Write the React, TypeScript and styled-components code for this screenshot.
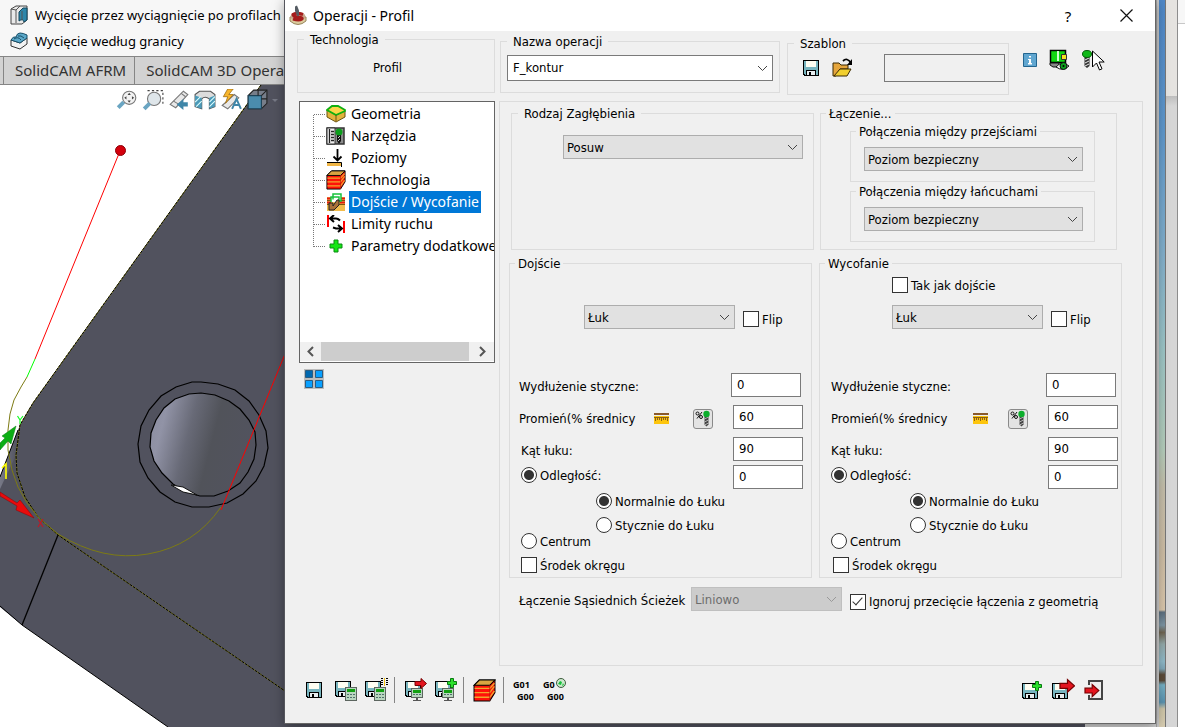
import React, { useState } from 'react';
import styled, { createGlobalStyle } from 'styled-components';

const GlobalStyle = createGlobalStyle`
  *, *::before, *::after { box-sizing: border-box; }
  html, body { margin: 0; padding: 0; }
  body { overflow: hidden; background: #fff; color: #000; }
  body, button, input, select { font-family: 'DejaVu Sans Condensed', 'DejaVu Sans', sans-serif; font-size: 13px; }
  button { border: 0; padding: 0; background: none; color: inherit; }
  svg { display: block; }
`;

const uiFont = `'Noto Sans', 'Open Sans', sans-serif`;

/* ---------- host application ---------- */

const Desktop = styled.div`
  position: relative;
  min-height: 100vh;
  overflow: hidden;
  display: flex;
`;
const Host = styled.div`
  flex: 1;
  min-width: 0;
  display: flex;
  flex-direction: column;
  background: #c9c9c9;
`;
const Ribbon = styled.div`
  height: 56px;
  padding: 2px 0 0 10px;
  background: #f7f7f7;
  display: flex;
  flex-direction: column;
  align-items: flex-start;
`;
const RibbonButton = styled.button`
  display: flex;
  align-items: center;
  gap: 7px;
  height: 26px;
  font-family: ${uiFont};
  font-size: 13px;
  white-space: nowrap;
`;
const TabBar = styled.div`
  height: 29px;
  padding-left: 3px;
  display: flex;
  background: #d2d2d2;
  border-top: 1px solid #858585;
  border-bottom: 1px solid #858585;
`;
const Tab = styled.button`
  padding: 0 8px 2px 11px;
  border-left: 1px solid #858585;
  font-family: ${uiFont};
  font-size: 15px;
  color: #333;
  white-space: nowrap;
`;
const Viewport = styled.div`
  position: relative;
  flex: 1;
  min-height: 0;
  overflow: hidden;
  background: #fff;
  & > svg { position: absolute; inset: 0; }
`;
const ViewTools = styled.div`
  position: relative;
  display: flex;
  gap: 4px;
  padding: 4px 0 0 116px;
`;
const HostEdge = styled.div`
  width: 3px;
  background: #cbcbcb;
  box-shadow: inset 1px 0 0 #a5a5a5;
`;
const Wallpaper = styled.div`
  width: 7px;
  border-right: 1px solid #777;
  background: linear-gradient(#4f88c8 0, #5f98cc 18%, #82b0cc 35%, #9cc5c6 48%, #b4ccba 62%, #c4beaa 67%, #cdbda4 76%, #d9c6ab 83.9%, #5d7080 84.2%, #7d95a3 86%, #6f6552 87%, #93a9a9 88.6%, #8fb9c8 91%, #7fa7b8 92%, #5a4a38 92.8%, #5a4a38 93.6%, #75b0c4 94.2%, #5a93b0 96.6%, #cfc6a8 97.5%, #d8cdb2 100%);
`;
const SideWindow = styled.div`
  width: 12px;
  border-right: 1px solid #8d8d8d;
  background: linear-gradient(#e5e3e0 0 96px, #bdbdbd 96px, #d6d6d6 106px);
`;
const SidePage = styled.div`
  width: 7px;
  background: linear-gradient(#f7f7f7 0 23px, #c8c8c8 23px 24px, #fff 24px);
`;

/* ---------- dialog ---------- */

const Dialog = styled.form`
  position: absolute;
  top: 0;
  left: 285px;
  right: 29px;
  background: #f0f0f0;
  border-right: 1px solid #666;
  border-bottom: 1px solid #666;
  box-shadow: -1px 0 0 #55565d, 0 2px 12px rgba(0, 0, 0, 0.4);
`;
const TitleBar = styled.header`
  height: 31px;
  display: flex;
  align-items: center;
  padding-left: 4px;
  background: #fff;
`;
const Title = styled.h1`
  flex: 1;
  margin: 0 0 0 5px;
  font: 400 14px/20px ${uiFont};
`;
const CaptionButton = styled.button`
  width: 58px;
  height: 30px;
  display: flex;
  align-items: center;
  justify-content: center;
  font-family: ${uiFont};
  font-size: 15px;
`;
const Body = styled.div`
  padding: 0 12px;
`;
const TopRow = styled.div`
  display: flex;
  align-items: flex-start;
  height: 70px;
`;
const Group = styled.fieldset<{ $wide?: boolean }>`
  min-width: 0;
  margin: 0;
  padding: 0;
  border: 1px solid #dcdcdc;
  & > legend {
    margin-left: ${(p) => (p.$wide ? 6 : 5)}px;
    padding: 0 ${(p) => (p.$wide ? 6 : 3)}px;
    line-height: 17px;
    white-space: nowrap;
  }
`;
const TechnologyGroup = styled(Group)`
  width: 198px;
  height: 62px;
  & > output { display: block; padding: 12px 0 0 75px; line-height: 16px; }
`;
const NameGroup = styled(Group)`
  flex: 1;
  margin: 2px 7px 0 5px;
  height: 60px;
  & > div { margin: 5px 6px 0 6px; }
`;
const TemplateGroup = styled(Group)`
  width: 222px;
  height: 60px;
  margin-top: 4px;
`;
const TemplateRow = styled.div`
  display: flex;
  align-items: center;
  gap: 12px;
  padding: 2px 3px 0 14px;
`;
const TemplateField = styled.input`
  width: 121px;
  height: 28px;
  margin-left: auto;
  border: 1px solid #7a7a7a;
  background: #f0f0f0;
`;
const QuickTools = styled.div`
  width: 134px;
  display: flex;
  align-items: center;
  gap: 11px;
  padding: 18px 0 0 13px;
`;
const PlainButton = styled.button`
  position: relative;
  flex: none;
  display: flex;
`;
const Pointer = styled.svg`
  position: absolute;
  left: 10px;
  top: 1px;
`;

const MainRow = styled.div`
  display: flex;
  gap: 4px;
`;
const Side = styled.div`
  width: 198px;
  padding-left: 2px;
`;
const Tree = styled.nav`
  height: 262px;
  display: flex;
  flex-direction: column;
  border: 1px solid #646464;
  background: #fff;
`;
const TreeList = styled.ul`
  flex: 1;
  margin: 0;
  padding: 1px 0 0 13px;
  list-style: none;
  overflow: hidden;
`;
const TreeItem = styled.li`
  display: flex;
  align-items: center;
  height: 22px;
  background:
    linear-gradient(90deg, transparent 50%, #777 50%) 0 11px / 2px 1px repeat-x,
    linear-gradient(transparent 50%, #777 50%) 0 0 / 1px 2px repeat-y;
  &:first-child, &:last-child {
    background:
      linear-gradient(90deg, transparent 50%, #777 50%) 0 11px / 2px 1px repeat-x,
      repeating-linear-gradient(transparent 0 1px, #777 1px 2px) 0 0 / 1px 12px no-repeat;
  }
  &:first-child { background-position: 0 11px, 0 11px; }
  & > svg { flex: none; margin-left: 13px; background: #fff; }
  & > a {
    flex: 1 0 auto;
    display: flex;
    background: #fff;
    color: #000;
    font: 14px/22px ${uiFont};
    text-decoration: none;
    white-space: nowrap;
    padding-left: 3px;
  }
  & > a > span { padding: 0 2px; }
  & > a[aria-current] > span { background: #0078d7; color: #fff; }
`;
const ScrollBar = styled.div`
  height: 20px;
  display: flex;
  background: #f0f0f0;
  border-bottom: 1px solid #fff;
  & > button { width: 21px; display: grid; place-items: center; }
  & > span { width: 148px; background: #cdcdcd; }
  & > button:last-child { margin-left: auto; width: 23px; }
`;
const LayoutButton = styled(PlainButton)`
  margin: 6px 0 0 5px;
`;
const Panel = styled.section`
  flex: 1;
  min-width: 0;
  height: 565px;
  padding-top: 3px;
  border: 1px solid #dcdcdc;
`;
const UpperGroups = styled.div`
  display: grid;
  grid-template-columns: 303fr 297fr;
  gap: 6px;
  margin: 0 25px 0 11px;
  height: 145px;
`;
const LowerGroups = styled.div`
  display: grid;
  grid-template-columns: 1fr 1fr;
  gap: 7px;
  margin: 5px 20px 0 9px;
  height: 323px;
`;
const PlungeSlot = styled.div`
  padding: 13px 10px 0 51px;
`;
const LinkSlot = styled.div`
  display: flex;
  flex-direction: column;
  gap: 1px;
  padding: 1px 21px 0 29px;
  & > fieldset > div { margin: 7px 11px 10px 13px; }
`;

const SelectBox = styled.div<{ $width?: number; $tall?: boolean }>`
  position: relative;
  flex: none;
  width: ${(p) => (p.$width ? `${p.$width}px` : 'auto')};
  height: ${(p) => (p.$tall ? 26 : 24)}px;
  & > select {
    appearance: none;
    display: block;
    width: 100%;
    height: 100%;
    padding: 0 20px ${(p) => (p.$tall ? 2 : 0)}px ${(p) => (p.$tall ? 5 : 3)}px;
    border: 1px solid ${(p) => (p.$tall ? '#7a7a7a' : '#adadad')};
    border-radius: 0;
    background: ${(p) => (p.$tall ? '#fff' : '#e1e1e1')};
    color: #000;
    opacity: 1;
  }
  & > select:disabled { background: #ccc; border-color: #bfbfbf; color: #6d6d6d; }
  & > select:disabled + svg { stroke: #999; }
  & > svg { position: absolute; right: 5px; top: 50%; margin-top: -3px; pointer-events: none; stroke: #444; }
`;

const Choice = styled.label`
  display: flex;
  align-items: center;
  gap: 3px;
  height: 16px;
  white-space: nowrap;
  & > input {
    appearance: none;
    position: relative;
    flex: none;
    width: 16px;
    height: 16px;
    margin: 0;
    border: 1px solid #333;
    background: #fff;
  }
  & > input[type='radio'] { border-radius: 50%; }
  & > input[type='radio']:checked { background: radial-gradient(circle, #333 0 4.5px, #fff 5.5px); }
  & > input[type='checkbox']:checked::after {
    content: '';
    position: absolute;
    left: 4px;
    top: 0;
    width: 5px;
    height: 10px;
    border: solid #333;
    border-width: 0 1px 1px 0;
    transform: rotate(42deg);
  }
`;

const Approach = styled.div<{ $left: number; $right: number }>`
  padding: 0 ${(p) => p.$right}px 0 ${(p) => p.$left}px;
`;
const SameRow = styled.div`
  height: 33px;
  padding: 5px 0 0 61px;
`;
const TypeRow = styled.div<{ $indent: number }>`
  display: flex;
  align-items: center;
  gap: 8px;
  height: 24px;
  margin-bottom: 40px;
  padding-left: ${(p) => p.$indent}px;
  & > label { margin-top: 4px; }
`;
const FieldRow = styled.div<{ $inset?: boolean; $indent?: boolean }>`
  display: flex;
  align-items: center;
  height: 32px;
  padding-right: ${(p) => (p.$inset ? 2 : 0)}px;
  padding-left: ${(p) => (p.$indent ? 2 : 0)}px;
  & > label { white-space: nowrap; padding-top: 3px; }
`;
const DistanceRow = styled.div<{ $indent?: boolean }>`
  display: flex;
  justify-content: space-between;
  align-items: flex-start;
  height: 24px;
  padding-left: ${(p) => (p.$indent ? 2 : 0)}px;
  & > label { margin-top: 2px; }
`;
const NumberField = styled.input`
  width: 70px;
  height: 24px;
  margin-left: auto;
  padding: 0 0 2px 5px;
  border: 1px solid #7a7a7a;
  background: #fff;
`;
const UnitButtons = styled.div<{ $gap: number }>`
  display: flex;
  align-items: center;
  gap: ${(p) => p.$gap}px;
  margin: 3px 20px 0 auto;
  & + input { margin-left: 0; }
`;
const SubChoices = styled.div<{ $indent: number }>`
  display: flex;
  flex-direction: column;
  gap: 8px;
  margin-top: 4px;
  padding-left: ${(p) => p.$indent}px;
`;
const LastChoices = styled.div<{ $indent?: boolean }>`
  display: flex;
  flex-direction: column;
  gap: 8px;
  & > label:first-child { padding-left: ${(p) => (p.$indent ? 2 : 0)}px; }
  & > label:last-child { padding-left: 2px; }
`;
const JoinRow = styled.div`
  display: flex;
  align-items: center;
  height: 24px;
  gap: 8px;
  margin: 9px 0 0 19px;
  & > label { padding-top: 2px; }
  & > label:last-child { margin-top: 3px; }
`;
const JoinLabel = styled.label`
  width: 164px;
  white-space: nowrap;
`;
const Footer = styled.footer`
  display: flex;
  align-items: center;
  gap: 5px;
  height: 57px;
  padding: 0 37px 9px 9px;
`;
const ToolButton = styled(PlainButton)`
  width: 24px;
  height: 26px;
  align-items: center;
`;
const Divider = styled.span`
  width: 1px;
  height: 26px;
  margin: 0 4px 0 1px;
  background: #858585;
`;
const Spacer = styled.span`
  flex: 1;
`;
const ExitTools = styled.div`
  display: flex;
  gap: 7px;
`;

/* ---------- drawings ---------- */

const Disk = ({ x = 0, y = 0 }: { x?: number; y?: number }) => (
  <g transform={`translate(${x} ${y})`} shapeRendering="crispEdges">
    <path d="M0 0h16v16h-15l-1-1z" fill="#000" />
    <path d="M1 1h14v14H2l-1-1z" fill="#78b5bf" />
    <path d="M3 0h10v7H3z" fill="#000" />
    <path d="M3 1h10v6H3z" fill="#fffef2" />
    <path d="M3 10h10v6H3z" fill="#000" />
    <path d="M4 11h8v4H4z" fill="#e8eef0" />
    <path d="M6 12h2v3H6z" fill="#000" />
  </g>
);
const Calc = ({ x, y }: { x: number; y: number }) => (
  <g transform={`translate(${x} ${y})`} shapeRendering="crispEdges">
    <path d="M0 0h12v14H0z" fill="#5c655f" />
    <path d="M1 1h10v12H1z" fill="#b8d6bf" />
    <path d="M2 2h8v3H2z" fill="#12a012" />
    <path d="M2 7h2v1H2zm3 0h2v1H5zm3 0h2v1H8zM2 10h2v1H2zm3 0h2v1H5zm3 0h2v1H8z" fill="#50706a" />
  </g>
);
const Monitor = ({ x, y }: { x: number; y: number }) => (
  <g transform={`translate(${x} ${y})`} shapeRendering="crispEdges">
    <path d="M0 0h12v10H0z" fill="#5c655f" />
    <path d="M1 1h10v8H1z" fill="#b8d6bf" />
    <path d="M2 2h8v3H2z" fill="#12a012" />
    <path d="M2 6h2v1H2zm3 0h2v1H5zm3 0h2v1H8z" fill="#50706a" />
    <path d="M5 10h2v2h3v1H2v-1h3z" fill="#555" />
  </g>
);
const RedArrow = ({ x, y, s = 1 }: { x: number; y: number; s?: number }) => (
  <path transform={`translate(${x} ${y}) scale(${s})`} d="M0 3.500h6V.5L11.500 5.500 6 10.500V7.500H0z" fill="#e3141e" stroke="#700" strokeWidth="1" />
);
const GreenPlus = ({ x, y }: { x: number; y: number }) => (
  <path transform={`translate(${x} ${y})`} d="M3.500.5h3v3h3v3h-3v3h-3v-3h-3v-3h3z" fill="#2be02b" stroke="#087a10" strokeWidth="1" />
);
const Chevron = () => (
  <svg width="11" height="7" viewBox="0 0 11 7" fill="none"><path d="M1 1l4.500 4.500L10 1" /></svg>
);
const Layers = ({ size }: { size: number }) => (
  <svg width={size} height={size} viewBox="0 0 22 22">
    <path d="M1 6L6 1h15v12l-5 8H1z" fill="#ff1208" stroke="#000" />
    <path d="M1 6L6 1h15l-5 5z" fill="#d9a441" stroke="#000" />
    <path d="M1.500 9H16l4.500-5M1.500 13H16l4.500-6M1.500 17.500H16l4.500-6" fill="none" stroke="#f2a52c" strokeWidth="1.300" />
    <path d="M16 6v15" stroke="#b01a08" strokeWidth=".7" />
  </svg>
);
const Ruler = () => (
  <svg width="15" height="13" viewBox="0 0 15 13">
    <path d="M0 1h15v2H0z" fill="#8a5a2b" />
    <path d="M0 4h15v8H0z" fill="#fdc50d" />
    <path d="M0 5.500h15M1.500 5v4M3.500 5v3M5.500 5v3M7.500 5v4M9.500 5v3M11.500 5v3M13.500 5v4" stroke="#8a5f18" fill="none" />
  </svg>
);
const PercentTool = () => (
  <svg width="20" height="20" viewBox="0 0 20 20">
    <rect x=".5" y=".5" width="19" height="19" rx="2.500" fill="#e3e3e3" stroke="#8a8a8a" />
    <g fill="none" stroke="#111"><circle cx="4.500" cy="4.500" r="1.500" /><circle cx="8" cy="8" r="1.500" /><path d="M9 3L4 9.500" /></g>
    <path d="M11.500 6h4v9.500l-2 2-2-2z" fill="#444" />
    <path d="M11.500 10l4-2M11.500 13l4-2M11.500 16l4-2" stroke="#ccc" strokeWidth=".8" />
    <circle cx="13.500" cy="5" r="3.200" fill="#0cae2c" />
  </svg>
);

const icons: Record<string, React.ReactNode> = {
  geometry: (
    <svg width="20" height="18" viewBox="0 0 20 18">
      <path d="M1 5l9 5 9-4v6l-9 5-9-5z" fill="#e2b33c" stroke="#6b5410" />
      <path d="M1 5l5-4h6l7 4v1l-9 4z" fill="#fbd648" stroke="#10b010" strokeWidth="1.800" />
      <path d="M10 10v6" stroke="#6b5410" />
    </svg>
  ),
  tools: (
    <svg width="20" height="18" viewBox="0 0 20 18">
      <path d="M1 1h17v16H1z" fill="#8c8c8c" stroke="#333" strokeWidth="1.500" />
      <path d="M1 1h8v16H1z" fill="#eee" stroke="#333" />
      <path d="M3.500 2v14M5 4.500h3M5 7.500h3M5 10.500h3M5 13.500h3" stroke="#222" strokeWidth="1.300" />
      <path d="M11 6h4v8l-2 3-2-3z" fill="#111" />
      <path d="M12 11l2-2M12 14l2-2" stroke="#ccc" />
      <circle cx="13" cy="5" r="3.500" fill="#0c9e1c" />
    </svg>
  ),
  levels: (
    <svg width="20" height="18" viewBox="0 0 20 18">
      <path d="M1 13h14v4H1z" fill="#f0b545" /><path d="M1 13.500h14.500V18" fill="none" stroke="#000" />
      <path d="M11.500 0v12M7.500 7.500l4 4 4-4" fill="none" stroke="#000" strokeWidth="1.800" />
    </svg>
  ),
  technology: <Layers size={20} />,
  link: (
    <svg width="20" height="18" viewBox="0 0 20 18">
      <path d="M1 4h18v14H1z" fill="#f2bd4c" />
      <path d="M1 5.500h7M12 5.500h7M1 9.500h4M14 9.500h5" stroke="#e21b10" strokeWidth="2" />
      <path d="M1 7.500h18M1 11.500h5M13 11.500h6" stroke="#7d5510" />
      <path d="M7 6.500V1h8v7h-2M5 9V4h8v5" fill="#fff" stroke="#16c23b" strokeWidth="1.500" />
      <path d="M3 17v-7h4v3l4-6h2v5l-5 5z" fill="#a9713a" stroke="#222" />
    </svg>
  ),
  limits: (
    <svg width="20" height="18" viewBox="0 0 20 18" fill="none" strokeWidth="2">
      <path d="M2 0v12M18 6v12" stroke="#f00" />
      <path d="M4 3.500h6q2 0 4 2M8 0L4 3.500 8 7M16 13.500h-6l-3-1M12 10l4 3.500-4 3.500" stroke="#000" />
    </svg>
  ),
  extra: (
    <svg width="20" height="18" viewBox="0 0 20 18">
      <path d="M8 3h4v4h4v4h-4v4H8v-4H4V7h4z" fill="#14e614" stroke="#0a8a12" />
    </svg>
  ),
};

const Part = () => (
  <svg width="1156" height="642" viewBox="0 85 1156 642">
    <defs>
      <linearGradient id="bore" x1="0" y1=".35" x2="1" y2=".6">
        <stop offset="0" stopColor="#8d8fa2" /><stop offset=".1" stopColor="#9193a6" /><stop offset=".35" stopColor="#686a77" />
        <stop offset=".58" stopColor="#51535a" /><stop offset="1" stopColor="#52535f" />
      </linearGradient>
      <linearGradient id="sideFace" x1="0" x2="1"><stop offset="0" stopColor="#777987" /><stop offset="1" stopColor="#51525e" /></linearGradient>
    </defs>
    <path d="M261 85L78 340 33 403 20 425 0 477v130l22 18 146 102h917V85z" fill="#51525e" />
    <path d="M18 430L0 477v12l16-34z" fill="url(#sideFace)" />
    <path d="M1085 85h71v642h-71z" fill="#d3d3d3" />
    <g fill="none" stroke="#000">
      <path d="M18 430L0 477M0 606l22 19 146 102" />
      <path d="M58 535L22 625" strokeWidth="1.300" />
      <path d="M261 85L78 340 33 403 20 425l-4 30 1 18 8 24 13 20 20 18 227 156" stroke="#86831a" />
      <path d="M261 85L78 340 33 403 20 425l-4 30 1 18 8 24 13 20 20 18 227 156" strokeDasharray="3 1" />
      <path d="M201 382l17 2 17 6 14 11 10 14 7 16 2 17-4 18-8 15-13 13-16 9-18 4h-17l-17-5-15-10-12-14-8-16-2-18 3-18 8-16 12-14 15-9 16-5z" strokeWidth="1.200" />
      <path d="M201 393l14 2 14 6 11 8 9 11 6 12 1 13-2 14-6 13-8 11-12 8-14 5h-14l-14-4-13-8-11-11-8-12-4-14 1-14 5-13 8-12 11-9 14-5z" fill="url(#bore)" strokeWidth="1.200" />
    </g>
    <path d="M171 485l12 2 14 8-14-3z" fill="#fff" stroke="#111" />
    <g fill="none">
      <path d="M27 377l-6 10-7 13-4 14-2 16v20l4 20 6 17 9 16 12 15 19 16q45 28 90 20 46-8 73-47" stroke="#7d7b14" />
      <path d="M120 151L35 359M221 510l64-156" stroke="#f00" />
      <path d="M35 359l-8 18" stroke="#0f0" />
    </g>
    <circle cx="120.500" cy="150.500" r="5" fill="#d4000c" stroke="#8c0008" />
    <path d="M16 426l-5 18-3-3-8 9v-7l5-5-3-2z" fill="#0cae14" stroke="#087a10" strokeWidth=".5" />
    <path d="M0 492l17 11 3-3 14 18-18-8 1-4-17-10z" fill="#e80c0c" stroke="#8c0008" strokeWidth=".5" />
    <path d="M17.500 416l2.500 4 3-4M20 420v4" stroke="#1f2" strokeWidth="1.200" fill="none" />
    <path d="M38 519l5 8M43 519l-5 8" stroke="#c01826" strokeWidth="1.200" />
    <path d="M2 468l4-4v15" stroke="#ff0" strokeWidth="1.600" fill="none" />
  </svg>
);

const viewIcons = [
  <g key="fit"><circle cx="12" cy="8" r="6" fill="#f2f2f2" stroke="#777" /><path d="M12 3.500l-1.500 2h3zM12 12.500l-1.500-2h3zM7.500 8l2-1.500v3zM16.500 8l-2-1.500v3z" fill="#444" /><path d="M7 12l-5 5" stroke="#6aa5c2" strokeWidth="3.500" /></g>,
  <g key="area"><path d="M5 1.500h14V15" fill="none" stroke="#444" strokeDasharray="2 2" /><circle cx="11" cy="9" r="6" fill="#dfe6ea" stroke="#777" /><path d="M7 13l-5 5" stroke="#6aa5c2" strokeWidth="3.500" /></g>,
  <g key="prev"><path d="M2 14L14 2l4 3L7 17z" fill="#e8e8e8" stroke="#777" /><path d="M5 11l5 3M12 4l4 3" stroke="#777" /><path d="M18 12v4h-4v3l-6-5 6-5v3z" fill="#3f86a8" /></g>,
  <g key="section"><path d="M1 5l4-3h10l4 3v11l-5 2v-9q-4-3-7 0v9l-6-2z" fill="#dcdcdc" stroke="#555" /><path d="M1 6l6 2v10l-6-2zM14 8l5-2v10l-5 2z" fill="#4b9ab9" /><path d="M1 12l5-5M2 16l5-5M14 12l5-5M14 16l5-5" stroke="#dff" /></g>,
  <g key="style"><path d="M2 15L13 5l4 3-10 10z" fill="#e8e8e8" stroke="#777" /><path d="M7 0L3 7h4l-2 6 7-8H8l4-5z" fill="#f7b52c" stroke="#9b6a10" strokeWidth=".7" /><path d="M11 18l4-9 4 9M12.500 14.500h5" fill="none" stroke="#3f86a8" strokeWidth="1.800" /></g>,
  <g key="orient"><path d="M7 1h12v12l-5 5H2V6z" fill="#777e8a" stroke="#222" /><path d="M2 6h12v12H2z" fill="#4b8cad" stroke="#1d4358" /><path d="M14 6l5-5M11 1v5M14 9h5" stroke="#222" /></g>,
];

/* ---------- form parts ---------- */

interface SelectProps { label: string; options: string[]; width?: number; tall?: boolean; disabled?: boolean; id?: string }
const Select = ({ label, options, width, tall, disabled, id }: SelectProps) => (
  <SelectBox $width={width} $tall={tall}>
    <select id={id} aria-label={label} disabled={disabled}>
      {options.map((o) => <option key={o}>{o}</option>)}
    </select>
    <Chevron />
  </SelectBox>
);

interface ApproachProps {
  id: string;
  legend: string;
  left: number;
  right: number;
  typeIndent: number;
  subIndent: number;
  unitGap: number;
  shifted?: boolean;
  sameOption?: boolean;
}
const ApproachGroup = ({ id, legend, left, right, typeIndent, subIndent, unitGap, shifted, sameOption }: ApproachProps) => (
  <Group>
    <legend>{legend}</legend>
    <Approach $left={left} $right={right}>
      <SameRow>
        {sameOption && <Choice><input type="checkbox" />Tak jak dojście</Choice>}
      </SameRow>
      <TypeRow $indent={typeIndent}>
        <Select label={legend} options={['Łuk']} width={151} />
        <Choice><input type="checkbox" />Flip</Choice>
      </TypeRow>
      <FieldRow $inset>
        <label htmlFor={`${id}-ext`}>Wydłużenie styczne:</label>
        <NumberField id={`${id}-ext`} defaultValue="0" />
      </FieldRow>
      <FieldRow>
        <label htmlFor={`${id}-radius`}>Promień(% średnicy</label>
        <UnitButtons $gap={unitGap}>
          <PlainButton type="button" aria-label="Wartość"><Ruler /></PlainButton>
          <PlainButton type="button" aria-label="Procent średnicy"><PercentTool /></PlainButton>
        </UnitButtons>
        <NumberField id={`${id}-radius`} defaultValue="60" />
      </FieldRow>
      <FieldRow $indent={shifted}>
        <label htmlFor={`${id}-angle`}>Kąt łuku:</label>
        <NumberField id={`${id}-angle`} defaultValue="90" />
      </FieldRow>
      <DistanceRow $indent={shifted}>
        <Choice><input type="radio" name={`${id}-mode`} defaultChecked />Odległość:</Choice>
        <NumberField aria-label="Odległość" defaultValue="0" />
      </DistanceRow>
      <SubChoices $indent={subIndent}>
        <Choice><input type="radio" name={`${id}-dir`} defaultChecked />Normalnie do Łuku</Choice>
        <Choice><input type="radio" name={`${id}-dir`} />Stycznie do Łuku</Choice>
      </SubChoices>
      <LastChoices $indent={shifted}>
        <Choice><input type="radio" name={`${id}-mode`} />Centrum</Choice>
        <Choice><input type="checkbox" />Środek okręgu</Choice>
      </LastChoices>
    </Approach>
  </Group>
);

const treeItems: [string, string][] = [
  ['geometry', 'Geometria'],
  ['tools', 'Narzędzia'],
  ['levels', 'Poziomy'],
  ['technology', 'Technologia'],
  ['link', 'Dojście / Wycofanie'],
  ['limits', 'Limity ruchu'],
  ['extra', 'Parametry dodatkowe'],
];

export default function App() {
  const [current, setCurrent] = useState('link');
  return (
    <>
      <GlobalStyle />
      <Desktop>
        <Host>
          <Ribbon>
            <RibbonButton type="button">
              <svg width="18" height="20" viewBox="0 0 18 20">
                <path d="M1 4l5-3h11v14l-5 4H1z" fill="#e9e9e9" stroke="#444" />
                <path d="M9 7l4-4h4v12l-3 2q-1-4-5-1z" fill="#2d86aa" stroke="#15465c" />
                <path d="M6 5v13M1 4l5 1 4-4M12 6v9" stroke="#555" fill="none" />
              </svg>
              Wycięcie przez wyciągnięcie po profilach
            </RibbonButton>
            <RibbonButton type="button">
              <svg width="18" height="18" viewBox="0 0 18 18">
                <path d="M1 8l9 3 7-5v6l-7 5-9-3z" fill="#f2f2f2" stroke="#333" />
                <path d="M1 8q2-4 5-3 1-4 4-4 3 0 7 2v3l-7 5z" fill="#5aa7c8" stroke="#174e68" />
                <path d="M4 7q4-3 7 1M8 4q3-1 6 2" stroke="#174e68" fill="none" />
              </svg>
              Wycięcie według granicy
            </RibbonButton>
          </Ribbon>
          <TabBar>
            <Tab type="button">SolidCAM AFRM</Tab>
            <Tab type="button">SolidCAM 3D Operacje</Tab>
          </TabBar>
          <Viewport>
            <Part />
            <ViewTools>
              {viewIcons.map((icon, i) => (
                <PlainButton type="button" key={i} aria-label={`Widok ${i + 1}`}>
                  <svg width="22" height="22" viewBox="0 0 20 20">{icon}</svg>
                </PlainButton>
              ))}
              <svg width="8" height="22" viewBox="0 0 8 22"><path d="M0 10h6l-3 3z" fill="#777985" /></svg>
            </ViewTools>
          </Viewport>
        </Host>
        <HostEdge />
        <Wallpaper />
        <SideWindow />
        <SidePage />

        <Dialog role="dialog" aria-labelledby="dialog-title" onSubmit={(e) => e.preventDefault()}>
          <TitleBar>
            <svg width="19" height="21" viewBox="0 0 19 21">
              <path d="M1 12v4q8 7 16 0v-4z" fill="#dccb9e" stroke="#97865c" />
              <ellipse cx="9" cy="11.500" rx="7.500" ry="4.500" fill="#c9a68c" />
              <path d="M14 9.500q-7-2.500-10 0 0 2 5 2.500t4 2q-3 2-9 0" stroke="#a51c1c" strokeWidth="3" fill="none" />
              <path d="M6 1.500l2-1 2 5v5l-1.500 1L6 6z" fill="#555c63" />
            </svg>
            <Title id="dialog-title">Operacji - Profil</Title>
            <CaptionButton type="button" aria-label="Pomoc">?</CaptionButton>
            <CaptionButton type="button" aria-label="Zamknij">
              <svg width="13" height="13" viewBox="0 0 13 13"><path d="M.5.5l12 12M12.500.5l-12 12" stroke="#111" strokeWidth="1.200" /></svg>
            </CaptionButton>
          </TitleBar>
          <Body>
            <TopRow>
              <TechnologyGroup $wide><legend>Technologia</legend><output>Profil</output></TechnologyGroup>
              <NameGroup $wide><legend>Nazwa operacji</legend><Select label="Nazwa operacji" options={['F_kontur']} tall /></NameGroup>
              <TemplateGroup $wide>
                <legend>Szablon</legend>
                <TemplateRow>
                  <PlainButton type="button" aria-label="Zapisz szablon"><svg width="18" height="18" viewBox="-1 -1 18 18"><Disk /></svg></PlainButton>
                  <PlainButton type="button" aria-label="Otwórz szablon">
                    <svg width="22" height="20" viewBox="0 0 22 20">
                      <path d="M1 18V5h6l2 2h7v4H8l-4 7z" fill="#e5a53c" stroke="#3b2a05" />
                      <path d="M2 18l6-7h11l-4 7z" fill="#f1cf2f" stroke="#3b2a05" />
                      <path d="M11 3q4-4 8 2" stroke="#000" strokeWidth="1.800" fill="none" /><path d="M20 1v6h-5z" fill="#000" />
                    </svg>
                  </PlainButton>
                  <TemplateField aria-label="Szablon" readOnly />
                </TemplateRow>
              </TemplateGroup>
              <QuickTools>
                <PlainButton type="button" aria-label="Informacja">
                  <svg width="16" height="16" viewBox="0 0 16 16">
                    <path d="M1.500 1.500h13v13h-13z" fill="#60a6d0" stroke="#23658f" />
                    <path d="M7 4h2v1.500H7zM6 7h3v4h1v1.500H6V11h1V8H6z" fill="#fff" />
                  </svg>
                </PlainButton>
                <PlainButton type="button" aria-label="Podgląd">
                  <svg width="22" height="22" viewBox="0 0 22 22">
                    <path d="M1.500 1.500h15v12h-15z" fill="#12d812" stroke="#000" strokeWidth="1.500" /><path d="M9 2v10" stroke="#cfc" strokeWidth="2" fill="none" />
                    <path d="M1 14h9v4H4l-3-2z" fill="#888" stroke="#111" />
                    <path d="M12.500 5.500h5v5h-5z" fill="#f5e320" stroke="#333" />
                    <path d="M7 18q6-7 13-1-6 6-13 1z" fill="#fff" stroke="#111" /><circle cx="14.500" cy="17" r="3.500" fill="#0c9e1c" stroke="#111" />
                    <circle cx="14.500" cy="17" r="1" fill="#000" />
                  </svg>
                </PlainButton>
                <PlainButton type="button" aria-label="Narzędzie">
                  <svg width="12" height="22" viewBox="0 0 12 22">
                    <path d="M2.500 7h5v10l-2.500 2-2.500-2z" fill="#333" />
                    <path d="M3 11l4-2M3 14l4-2M3 17l4-2" stroke="#eee" />
                    <ellipse cx="5" cy="5" rx="4.500" ry="3.500" fill="#10b818" stroke="#065c0a" />
                  </svg>
                  <Pointer width="13" height="21" viewBox="0 0 13 21"><path d="M.5 1v16l4-4 3 7 2.500-1.200L7 12h5.200z" fill="#fff" stroke="#000" /></Pointer>
                </PlainButton>
              </QuickTools>
            </TopRow>

            <MainRow>
              <Side>
                <Tree aria-label="Parametry operacji">
                  <TreeList>
                    {treeItems.map(([key, text]) => (
                      <TreeItem key={key}>
                        {icons[key]}
                        <a href={`#${key}`} aria-current={current === key || undefined} onClick={() => setCurrent(key)}><span>{text}</span></a>
                      </TreeItem>
                    ))}
                  </TreeList>
                  <ScrollBar>
                    <button type="button" aria-label="Przewiń w lewo"><svg width="7" height="11" viewBox="0 0 7 11" fill="none" stroke="#555" strokeWidth="2"><path d="M6 1L1.500 5.500 6 10" /></svg></button>
                    <span />
                    <button type="button" aria-label="Przewiń w prawo"><svg width="7" height="11" viewBox="0 0 7 11" fill="none" stroke="#555" strokeWidth="2"><path d="M1 1l4.500 4.500L1 10" /></svg></button>
                  </ScrollBar>
                </Tree>
                <LayoutButton type="button" aria-label="Układ">
                  <svg width="20" height="20" viewBox="0 0 20 20" stroke="#2b5c80">
                    <path d="M0 0h20v20H0z" fill="#bcbcbc" stroke="none" />
                    <path d="M1.500 1.500h7v7h-7z" fill="#0068b0" /><path d="M11.500 1.500h7v7h-7zM1.500 11.500h7v7h-7zM11.500 11.500h7v7h-7z" fill="#08a0ff" />
                  </svg>
                </LayoutButton>
              </Side>

              <Panel>
                <UpperGroups>
                  <Group $wide>
                    <legend>Rodzaj Zagłębienia</legend>
                    <PlungeSlot><Select label="Rodzaj Zagłębienia" options={['Posuw']} /></PlungeSlot>
                  </Group>
                  <Group>
                    <legend>Łączenie...</legend>
                    <LinkSlot>
                      <Group><legend>Połączenia między przejściami</legend><Select label="Połączenia między przejściami" options={['Poziom bezpieczny']} /></Group>
                      <Group><legend>Połączenia między łańcuchami</legend><Select label="Połączenia między łańcuchami" options={['Poziom bezpieczny']} /></Group>
                    </LinkSlot>
                  </Group>
                </UpperGroups>
                <LowerGroups>
                  <ApproachGroup id="in" legend="Dojście" left={9} right={8} typeIndent={65} subIndent={77} unitGap={24} shifted />
                  <ApproachGroup id="out" legend="Wycofanie" left={11} right={3} typeIndent={61} subIndent={79} unitGap={20} sameOption />
                </LowerGroups>
                <JoinRow>
                  <JoinLabel htmlFor="join">Łączenie Sąsiednich Ścieżek</JoinLabel>
                  <Select id="join" label="Łączenie Sąsiednich Ścieżek" options={['Liniowo']} width={151} disabled />
                  <Choice><input type="checkbox" defaultChecked />Ignoruj przecięcie łączenia z geometrią</Choice>
                </JoinRow>
              </Panel>
            </MainRow>

            <Footer>
              <ToolButton type="button" aria-label="Zapisz"><svg width="24" height="26" viewBox="0 0 24 26"><Disk y={5} /></svg></ToolButton>
              <ToolButton type="button" aria-label="Zapisz i oblicz"><svg width="24" height="26" viewBox="0 0 24 26"><Disk y={4} /><Calc x={10} y={10} /></svg></ToolButton>
              <ToolButton type="button" aria-label="Zapisz i oblicz wszystko"><svg width="24" height="26" viewBox="0 0 24 26"><Disk x={1} y={4} /><Calc x={10} y={10} /><path d="M18 1v8M23 1v8" stroke="#000" strokeWidth="2" strokeDasharray="1 1" /><path d="M20.500 1v8" stroke="#f4c20d" strokeWidth="1" /></svg></ToolButton>
              <Divider />
              <ToolButton type="button" aria-label="Symuluj i wyjdź"><svg width="24" height="26" viewBox="0 0 24 26"><Disk x={1} y={4} /><Monitor x={7} y={11} /><RedArrow x={11} y={1} /></svg></ToolButton>
              <ToolButton type="button" aria-label="Symuluj i kopiuj"><svg width="24" height="26" viewBox="0 0 24 26"><Disk x={2} y={4} /><Monitor x={9} y={11} /><GreenPlus x={14} y={1} /></svg></ToolButton>
              <Divider />
              <ToolButton type="button" aria-label="Symulacja"><Layers size={23} /></ToolButton>
              <Divider />
              <ToolButton type="button" aria-label="Kod G">
                <svg width="24" height="26" viewBox="0 0 24 26" fontFamily="Noto Sans, sans-serif" fontSize="9" fontWeight="700"><text x="0" y="11">G01</text><text x="4" y="23">G00</text></svg>
              </ToolButton>
              <ToolButton type="button" aria-label="Kod G z podglądem">
                <svg width="24" height="26" viewBox="0 0 24 26" fontFamily="Noto Sans, sans-serif" fontSize="9" fontWeight="700">
                  <text x="1" y="11">G0</text><text x="5" y="23">G00</text>
                  <circle cx="19" cy="6" r="4.500" fill="#cde8cd" stroke="#3d5c3d" /><path d="M16 7l2-3 2 1-1 3zM21 6l1 2-2 1z" fill="#16c23b" />
                </svg>
              </ToolButton>
              <Spacer />
              <ExitTools>
                <ToolButton type="button" aria-label="Zapisz i kopiuj"><svg width="24" height="26" viewBox="0 0 24 26"><Disk x={2} y={6} /><GreenPlus x={12} y={4} /></svg></ToolButton>
                <ToolButton type="button" aria-label="Zapisz i wyjdź"><svg width="24" height="26" viewBox="0 0 24 26"><Disk x={1} y={6} /><RedArrow x={9} y={2} s={1.250} /></svg></ToolButton>
                <ToolButton type="button" aria-label="Wyjdź"><svg width="24" height="26" viewBox="0 0 24 26"><path d="M7 8V4h13v18H7v-4" fill="#eee" stroke="#444" strokeWidth="2" /><RedArrow x={3} y={7} s={1.200} /></svg></ToolButton>
              </ExitTools>
            </Footer>
          </Body>
        </Dialog>
      </Desktop>
    </>
  );
}
